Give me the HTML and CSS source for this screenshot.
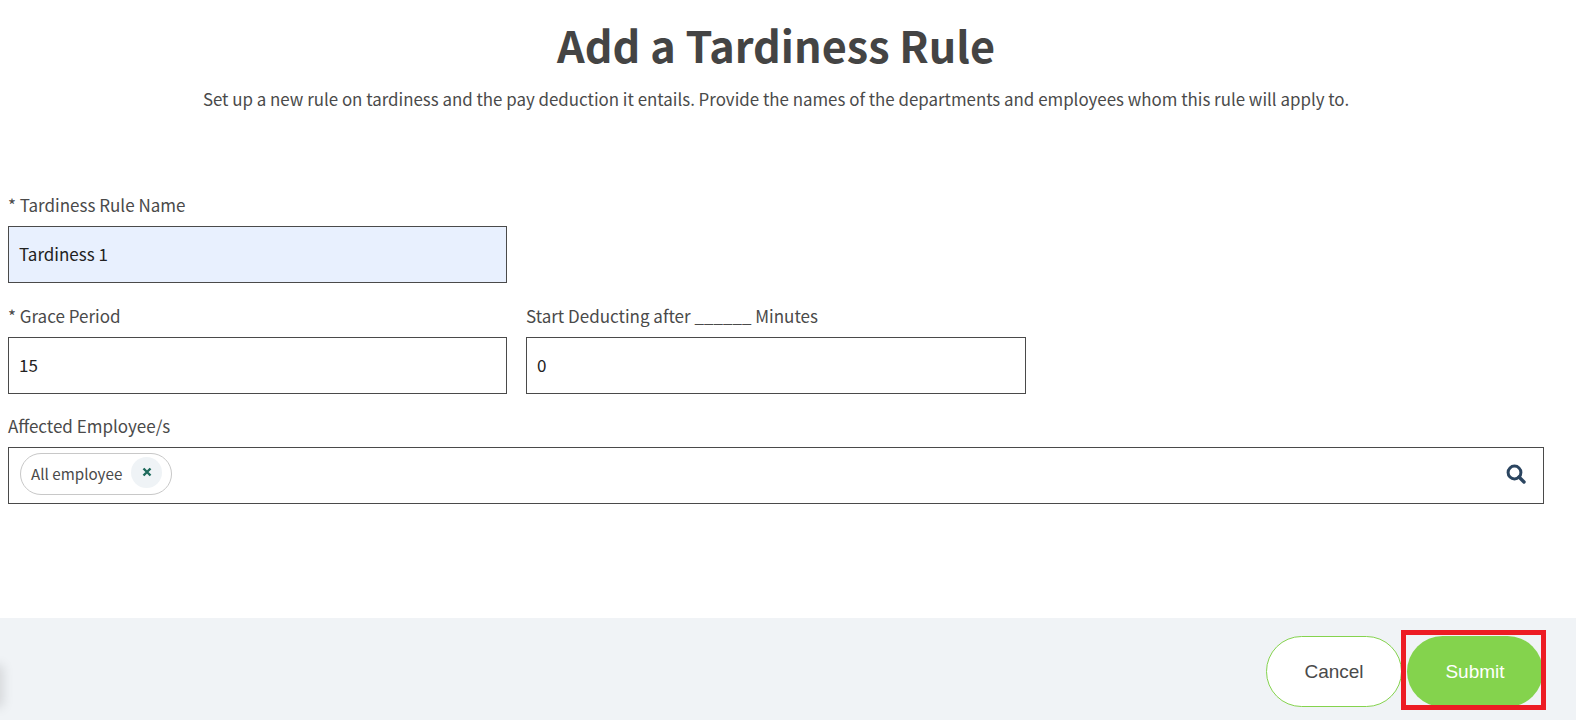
FILE: index.html
```html
<!DOCTYPE html>
<html lang="en">
<head>
<meta charset="utf-8">
<title>Add a Tardiness Rule</title>
<link rel="stylesheet" href="styles.css">
</head>
<body>
<main class="page">
  <header class="head">
    <h1 class="title">Add a Tardiness Rule</h1>
    <p class="subtitle">Set up a new rule on tardiness and the pay deduction it entails. Provide the names of the departments and employees whom this rule will apply to.</p>
  </header>
  <form class="form">
    <div class="row">
      <div class="field">
        <label class="label">* Tardiness Rule Name</label>
        <div class="input input-filled">Tardiness 1</div>
      </div>
    </div>
    <div class="row">
      <div class="field">
        <label class="label">* Grace Period</label>
        <div class="input">15</div>
      </div>
      <div class="field field-wide">
        <label class="label">Start Deducting after ______ Minutes</label>
        <div class="input">0</div>
      </div>
    </div>
    <div class="field-full">
      <label class="label">Affected Employee/s</label>
      <div class="input search">
        <span class="chip">All employee
          <span class="chip-x">
            <svg width="10" height="10" viewBox="0 0 10 10"><path d="M1.5 1.5L8.5 8.5M8.5 1.5L1.5 8.5" stroke="#1f6a5c" stroke-width="2.4" fill="none"/></svg>
          </span>
        </span>
        <svg class="search-icon" width="20" height="20" viewBox="0 0 20 20"><circle cx="8.5" cy="8.5" r="6.4" stroke="#2b4560" stroke-width="3" fill="none"/><path d="M13 13L18 18" stroke="#2b4560" stroke-width="3.4" stroke-linecap="round"/></svg>
      </div>
    </div>
  </form>
</main>
<footer class="footer">
  <span class="smudge"></span>
  <button class="btn btn-cancel" type="button">Cancel</button>
  <button class="btn btn-submit" type="button">Submit</button>
  <span class="highlight"></span>
</footer>
</body>
</html>
```
FILE: styles.css
```css
* { box-sizing: border-box; }
html, body { margin: 0; padding: 0; }
body {
  width: 1576px;
  height: 720px;
  overflow: hidden;
  background: #fff;
  color: #4a4a4a;
  font-family: "Noto Sans CJK JP", "Source Sans Pro", "Noto Sans", sans-serif;
  display: flex;
  flex-direction: column;
}
.page { flex: 1; padding: 0 32px 0 8px; }
.head { text-align: center; padding-top: 14px; }
.title {
  margin: 0;
  font-size: 43.2px;
  line-height: 60px;
  font-weight: 700;
  color: #444;
}
.subtitle {
  margin: 13px 0 0;
  font-size: 16.9px;
  line-height: 24px;
  color: #4a4a4a;
}
.form { margin-top: 82px; display: flex; flex-direction: column; gap: 20px; }
.row { display: flex; gap: 19px; }
.row:first-child { margin-bottom: 1px; }
.field { width: 499px; }
.field-wide { width: 500px; }
.field-full { width: 1536px; }
.label {
  display: block;
  font-size: 17px;
  line-height: 24px;
  margin-bottom: 9px;
  color: #4a4a4a;
}
.input {
  height: 57px;
  border: 1px solid #4a4a4a;
  background: #fff;
  padding: 0 10px 2px;
  display: flex;
  align-items: center;
  font-size: 17px;
  color: #222;
}
.input-filled { background: #e8f0fe; }
.search { justify-content: space-between; padding: 0 17px 4px 11px; }
.chip {
  display: inline-flex;
  align-items: center;
  gap: 9px;
  height: 42px;
  padding: 0 9px 2px 10px;
  border: 1px solid #c8c8c8;
  border-radius: 21px;
  font-size: 15.2px;
  color: #4a4a4a;
}
.chip-x {
  width: 31px;
  height: 31px;
  border-radius: 50%;
  background: #eff3f6;
  display: flex;
  align-items: center;
  justify-content: center;
  padding-bottom: 2px;
}
.search-icon { display: block; }
.footer {
  position: relative;
  height: 102px;
  background: #f0f3f6;
  display: flex;
  justify-content: flex-end;
  align-items: flex-start;
  gap: 5px;
  padding: 18px 33px 0 0;
}
.btn {
  width: 136px;
  height: 71px;
  border-radius: 36px;
  font-family: "Liberation Sans", Arial, sans-serif;
  font-size: 19px;
  padding: 0;
}
.btn-cancel { background: #fff; border: 1px solid #85d34e; color: #4a4a4a; }
.btn-submit { background: #84d34d; border: 0; color: #fff; }
.highlight {
  position: absolute;
  left: 1401px;
  top: 12px;
  width: 145px;
  height: 80px;
  border: 5px solid #ed1c24;
}
.smudge {
  position: absolute;
  left: -10px;
  top: 50px;
  width: 10px;
  height: 36px;
  box-shadow: 0 0 12px 3px rgba(0, 0, 0, 0.12);
}
```
